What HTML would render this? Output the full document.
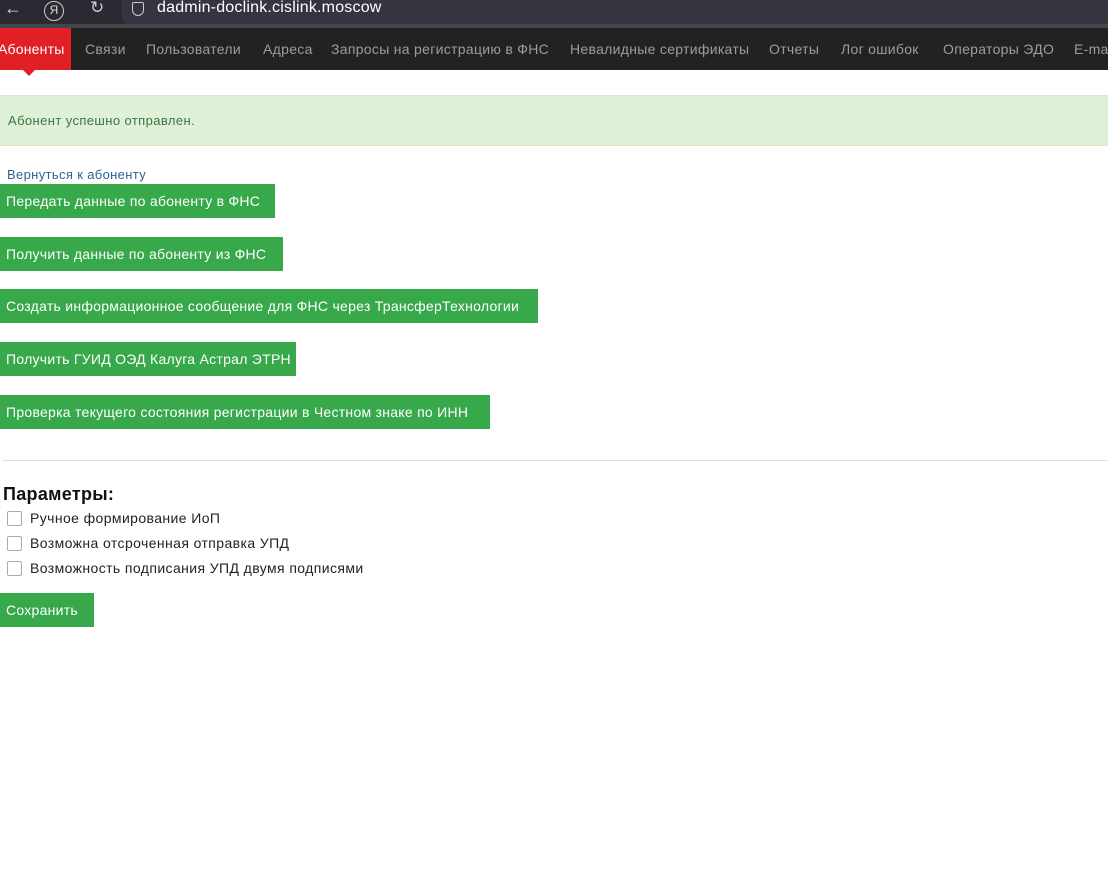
<!DOCTYPE html>
<html><head><meta charset="utf-8"><style>
*{margin:0;padding:0;box-sizing:border-box}
body{width:1108px;height:870px;background:#fff;font-family:"Liberation Sans","DejaVu Sans",sans-serif;position:relative;overflow:hidden}
.top{position:absolute;left:0;top:0;width:1108px;height:24px;background:#2b2a33}
.url{position:absolute;left:122px;top:0;width:986px;height:24px;background:#35343f;border-radius:0 0 0 8px}
.strip{position:absolute;left:0;top:24px;width:1108px;height:4px;background:#45444f}
.nav{position:absolute;left:0;top:28px;width:1108px;height:42px;background:#222}
.nav span{position:absolute;top:13px;font-size:14px;color:#9d9d9d;white-space:nowrap;letter-spacing:0.3px}
.act{position:absolute;left:0;top:28px;width:71px;height:42px;background:#e02025;overflow:hidden}
.tri{position:absolute;left:23px;top:70px;width:0;height:0;border-left:6px solid transparent;border-right:6px solid transparent;border-top:6px solid #e02025}
.alert{position:absolute;left:0;top:95px;width:1108px;height:51px;background:#dff0d8;border-top:1px solid #d6e9c6;border-bottom:1px solid #d6e9c6;color:#3c763d;font-size:13px;padding:17px 8px;letter-spacing:0.4px}
a{position:absolute;left:7px;top:167px;font-size:13px;color:#2a6496;text-decoration:none;letter-spacing:0.35px}
.btn{position:absolute;left:0;height:34px;background:#37a94a;color:#fff;font-size:14px;padding:9px 6px;white-space:nowrap;letter-spacing:0.27px}
hr{position:absolute;left:3px;top:460px;width:1105px;border:0;border-top:1px solid #ddd}
h3{position:absolute;left:3px;top:484px;font-size:18px;font-weight:bold;color:#111;letter-spacing:0.3px}
.cb{position:absolute;left:7px;width:15px;height:15px;border:1px solid #aaa;border-radius:2px;background:#fff}
.lb{position:absolute;left:30px;font-size:14px;color:#222;white-space:nowrap;letter-spacing:0.4px}
</style></head><body>
<div class="top"></div><div class="url"></div><div class="strip"></div>
<div style="position:absolute;left:4px;top:-2px;color:#ddd;font-size:18px">←</div>
<div style="position:absolute;left:44px;top:1px;width:20px;height:20px;border:1.5px solid #ccc;border-radius:50%;color:#ddd;font-size:12px;text-align:center;line-height:17px">Я</div>
<div style="position:absolute;left:90px;top:-2px;color:#ccc;font-size:17px">↻</div>
<div style="position:absolute;left:132px;top:2px;width:12px;height:14px;border:1.5px solid #ccc;border-radius:2px 2px 6px 6px"></div>
<div style="position:absolute;left:157px;top:-1px;color:#fff;font-size:16px;letter-spacing:0.2px">dadmin-doclink.cislink.moscow</div>
<div class="nav">
<span style="left:85px">Связи</span><span style="left:146px">Пользователи</span><span style="left:263px">Адреса</span><span style="left:331px">Запросы на регистрацию в ФНС</span><span style="left:570px">Невалидные сертификаты</span><span style="left:769px">Отчеты</span><span style="left:841px">Лог ошибок</span><span style="left:943px">Операторы ЭДО</span><span style="left:1074px">E-mail</span>
</div>
<div class="act"><span style="position:absolute;left:-2px;top:13px;font-size:14px;color:#fff;letter-spacing:0.2px">Абоненты</span></div>
<div class="tri"></div>
<div class="alert">Абонент успешно отправлен.</div>
<a>Вернуться к абоненту</a>
<div class="btn" style="top:184px;width:275px">Передать данные по абоненту в ФНС</div>
<div class="btn" style="top:237px;width:283px">Получить данные по абоненту из ФНС</div>
<div class="btn" style="top:289px;width:538px">Создать информационное сообщение для ФНС через ТрансферТехнологии</div>
<div class="btn" style="top:342px;width:296px">Получить ГУИД ОЭД Калуга Астрал ЭТРН</div>
<div class="btn" style="top:395px;width:490px">Проверка текущего состояния регистрации в Честном знаке по ИНН</div>
<hr>
<h3>Параметры:</h3>
<div class="cb" style="top:511px"></div><div class="lb" style="top:510px">Ручное формирование ИоП</div>
<div class="cb" style="top:536px"></div><div class="lb" style="top:535px">Возможна отсроченная отправка УПД</div>
<div class="cb" style="top:561px"></div><div class="lb" style="top:560px">Возможность подписания УПД двумя подписями</div>
<div class="btn" style="top:593px;width:94px">Сохранить</div>
</body></html>
